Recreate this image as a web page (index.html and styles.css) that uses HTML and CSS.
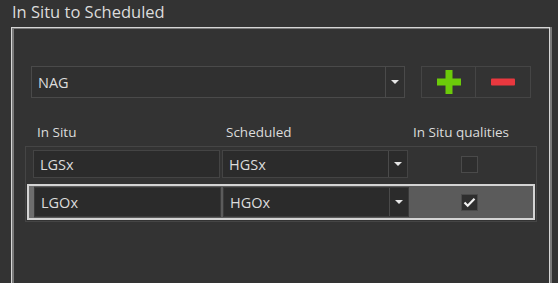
FILE: index.html
```html
<!DOCTYPE html>
<html lang="en">
<head>
  <meta charset="UTF-8" />
  <title>In Situ to Scheduled</title>
  <link rel="stylesheet" href="styles.css">
</head>
<body>

  <div class="title">In Situ to Scheduled</div>

  <div class="group">
    <div class="top-row">
      <div class="combo big">
        <span class="combo-text">NAG</span>
        <span class="combo-arrow"><i></i></span>
      </div>
      <div class="btn-pair">
        <div class="btn">
          <svg width="24" height="24" viewBox="0 0 24 24"><path d="M8.5 0h7v8.5H24v7h-8.5V24h-7v-8.5H0v-7h8.5z" fill="#6ccb0a"/></svg>
        </div>
        <div class="btn">
          <svg width="24" height="8" viewBox="0 0 24 8"><rect x="0" y="0.5" width="24" height="7" rx="1" fill="#e9383f"/></svg>
        </div>
      </div>
    </div>

    <div class="headers">
      <span class="h-insitu">In Situ</span>
      <span class="h-sched">Scheduled</span>
      <span class="h-qual">In Situ qualities</span>
    </div>

    <div class="table">
      <div class="row">
        <div class="cell text-cell">LGSx</div>
        <div class="cell combo small">
          <span class="combo-text">HGSx</span>
          <span class="combo-arrow"><i></i></span>
        </div>
        <div class="check-cell"><span class="check"></span></div>
      </div>
      <div class="row selected">
        <div class="cell text-cell">LGOx</div>
        <div class="cell combo small">
          <span class="combo-text">HGOx</span>
          <span class="combo-arrow"><i></i></span>
        </div>
        <div class="check-cell">
          <span class="check">
            <svg width="15" height="15" viewBox="0 0 15 15"><path d="M2.5 7.5l3.2 3.2L12.5 3.8" fill="none" stroke="#f2f2f2" stroke-width="2.2"/></svg>
          </span>
        </div>
      </div>
    </div>
  </div>

</body>
</html>
```

FILE: styles.css
```css
body {
  margin: 0;
  background: #333333;
  color: #dcdcdc;
  font-family: "Open Sans", "Noto Sans", sans-serif;
  height: 283px;
  overflow: hidden;
}

.title {
  font-size: 16.5px;
  padding: 1px 0 0 12px;
  height: 26px;
  line-height: 22px;
}

.group {
  margin-left: 11px;
  width: 539px;
  height: 256px;
  box-sizing: border-box;
  border: 1px solid #d6d6d6;
  border-bottom: none;
  box-shadow: inset 2px 1px 0 #7a7a7a, 2px 0 0 #7a7a7a;
}

.top-row {
  display: flex;
  padding: 38px 0 0 19px;
  gap: 16px;
}

.combo {
  display: flex;
  align-items: center;
  background: #303030;
  border: 1px solid #4a4a4a;
  box-sizing: border-box;
}

.combo.big {
  width: 374px;
  height: 32px;
  font-size: 14.5px;
}

.combo-text {
  flex: 1;
  padding-left: 6px;
}

.combo-arrow {
  width: 18px;
  align-self: stretch;
  border-left: 1px solid #4a4a4a;
  display: flex;
  align-items: center;
  justify-content: center;
}

.combo-arrow i {
  width: 0;
  height: 0;
  border-left: 4px solid transparent;
  border-right: 4px solid transparent;
  border-top: 4px solid #e6e6e6;
}

.btn-pair {
  display: flex;
}

.btn {
  width: 55px;
  height: 32px;
  box-sizing: border-box;
  border: 1px solid #454545;
  display: flex;
  align-items: center;
  justify-content: center;
}

.btn + .btn {
  border-left: none;
}

.headers {
  position: relative;
  height: 20px;
  margin-top: 25px;
  font-size: 13.5px;
}

.headers span {
  position: absolute;
  top: 0;
}

.h-insitu { left: 25px; }
.h-sched { left: 214px; }
.h-qual { left: 401px; }

.table {
  margin: 3px 0 0 13px;
  width: 512px;
  box-sizing: border-box;
  border: 1px solid #454545;
  padding: 0 0 1px 1px;
}

.row {
  display: flex;
  height: 36px;
  box-sizing: border-box;
  border: 2px solid transparent;
  padding: 1px 0 3px 4px;
  width: 508px;
}

.row + .row {
  margin-top: 1px;
}

.row.selected {
  border-color: #d4d4d4;
  background: #5b5b5b;
  padding: 1px 0 1px 5px;
  box-shadow: inset 5px 0 0 #6e6e6e;
}

.cell {
  background: #2b2b2b;
  border: 1px solid #444444;
  box-sizing: border-box;
  font-size: 14.5px;
}

.text-cell {
  width: 187px;
  padding-left: 6px;
  display: flex;
  align-items: center;
}

.combo.small {
  width: 186px;
  margin-left: 2px;
}

.row.selected .text-cell,
.row.selected .combo.small {
  border-color: #3a3a3a;
}

.check-cell {
  flex: 1;
  display: flex;
  align-items: center;
  justify-content: center;
  padding-right: 3px;
}

.check {
  width: 17px;
  height: 17px;
  box-sizing: border-box;
  border: 1px solid #4a4a4a;
  background: #2e2e2e;
  display: flex;
  align-items: center;
  justify-content: center;
}
```
